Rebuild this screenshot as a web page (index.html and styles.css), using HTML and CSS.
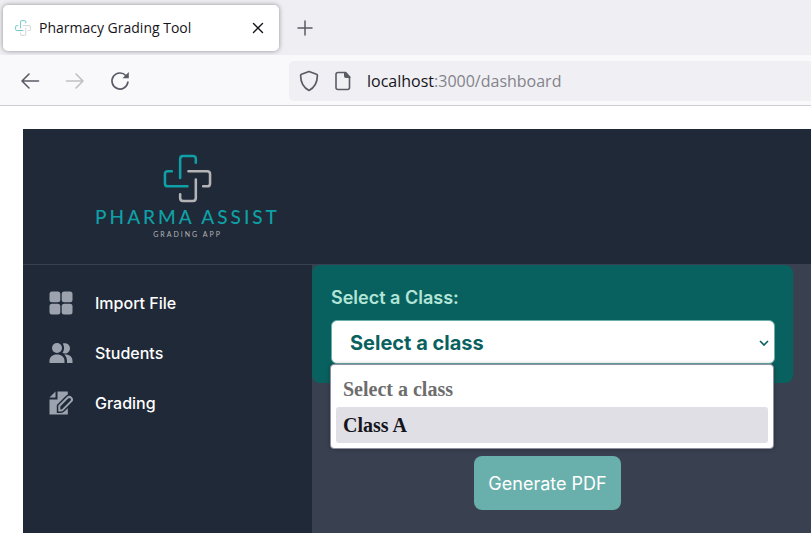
FILE: index.html
```html
<!DOCTYPE html>
<html lang="en">
<head>
<meta charset="utf-8">
<title>Pharmacy Grading Tool</title>
<link rel="stylesheet" href="styles.css">
</head>
<body>
<svg class="defs" aria-hidden="true">
  <symbol id="cross" viewBox="0 0 50 50" fill="none" stroke-width="2.6" stroke-linecap="round" stroke-linejoin="round">
    <path stroke="#0fa0a6" d="M33.500 9V5Q33.500 2 30.500 2H20.500Q17.500 2 17.500 5V24.500M9 17.500H5Q2 17.500 2 20.500V30Q2 33 5 33H25"/>
    <path stroke="#b4b4b6" d="M26 17.500H45Q48 17.500 48 20.500V30Q48 33 45 33H41M33.500 26V45Q33.500 48 30.500 48H20.500Q17.500 48 17.500 45V41"/>
  </symbol>
</svg>
<div class="tabstrip">
  <div class="tab">
    <svg class="favicon"><use href="#cross"/></svg>
    <span class="tab-title">Pharmacy Grading Tool</span>
    <button class="icon-button" aria-label="Close tab"><svg width="12" height="12" viewBox="0 0 12 12"><path d="M1.500 1.500l9 9M10.500 1.500l-9 9" stroke="#15141a" stroke-width="1.400" stroke-linecap="round"/></svg></button>
  </div>
  <button class="icon-button" aria-label="New tab"><svg width="16" height="16" viewBox="0 0 16 16"><path d="M8 1v14M1 8h14" stroke="#5b5b66" stroke-width="1.500" stroke-linecap="round"/></svg></button>
</div>
<div class="toolbar">
  <nav class="history" aria-label="History">
    <button class="icon-button" aria-label="Back"><svg width="20" height="18" viewBox="0 0 20 18" fill="none" stroke="#5b5b66" stroke-width="1.600" stroke-linecap="round" stroke-linejoin="round"><path d="M18.500 9H2M9 2L2 9l7 7"/></svg></button>
    <button class="icon-button" aria-label="Forward" disabled><svg width="20" height="18" viewBox="0 0 20 18" fill="none" stroke="#bfbfc5" stroke-width="1.600" stroke-linecap="round" stroke-linejoin="round"><path d="M1.500 9H18M11 2l7 7-7 7"/></svg></button>
    <button class="icon-button" aria-label="Reload"><svg width="20" height="20" viewBox="0 0 20 20"><path d="M17.900 11.200A8 8 0 1 1 16 4.700" fill="none" stroke="#5b5b66" stroke-width="1.700" stroke-linecap="round"/><path d="M18.800 1v6.300h-6.300z" fill="#5b5b66"/></svg></button>
  </nav>
  <div class="address">
    <svg width="20" height="22" viewBox="0 0 20 22" fill="none" stroke="#5b5b66" stroke-width="1.700" stroke-linejoin="round"><path d="M10 1.500l7.500 2.800q.9.400.9 1.300C18.300 13 15 18 10 20.500 5 18 1.700 13 1.600 5.600q0-.9.900-1.300z"/></svg>
    <svg width="16" height="20" viewBox="0 0 16 20"><path d="M3 1.500h7.500l4 4.500v10.500q0 2-2 2H3q-2 0-2-2v-13q0-2 2-2z" fill="none" stroke="#5b5b66" stroke-width="1.600"/><path d="M9 1h2l4.500 5v1H11q-2 0-2-2z" fill="#5b5b66"/></svg>
    <span class="url"><b>localhost</b>:3000/dashboard</span>
  </div>
</div>
<div class="app">
  <header class="app-header">
    <div class="brand">
      <svg class="brand-mark"><use href="#cross"/></svg>
      <span class="brand-name">PHARMA ASSIST</span>
      <span class="brand-sub">GRADING APP</span>
    </div>
  </header>
  <div class="body">
    <nav class="sidebar" aria-label="Main">
      <a href="#import"><svg viewBox="0 0 24 24"><rect x="0.500" y="0.500" width="10.800" height="10.800" rx="2.500"/><rect x="12.700" y="0.500" width="10.800" height="10.800" rx="2.500"/><rect x="0.500" y="12.700" width="10.800" height="10.800" rx="2.500"/><rect x="12.700" y="12.700" width="10.800" height="10.800" rx="2.500"/></svg>Import File</a>
      <a href="#students"><svg viewBox="0 0 24 24"><circle cx="8" cy="7" r="5"/><path d="M.5 22v-2c0-4 3-6.500 7.500-6.500s7.500 2.500 7.500 6.500v2zM13.500 12c2.200-3 2-6.800.3-9.400 3.700-1.400 7.200 1 7.200 4.600 0 3.800-3.800 6.400-7.500 4.800zM16 13.500c5 0 7.500 2.500 7.500 6.500v2H18v-2c0-2.500-.8-4.800-2.800-6.500z"/></svg>Students</a>
      <a href="#grading"><svg viewBox="0 0 24 24"><path d="M.5 6.500L6.500.5v6z"/><path d="M8.500.5h10.300V23.500H.5v-15h8z"/><path class="pencil-gap" d="M10.300 19.500v-4.500l8.200-8.200a2.500 2.500 0 0 1 3.600 3.600l-8.200 8.200q-.9.900-2 .9z"/><path class="pencil" d="M10.300 19.500v-4.500l8.200-8.200a2.500 2.500 0 0 1 3.600 3.600l-8.200 8.200q-.9.900-2 .9z"/></svg>Grading</a>
    </nav>
    <main class="content">
      <section class="card">
        <label for="class-select">Select a Class:</label>
        <div class="picker">
          <select id="class-select"><option>Select a class</option><option>Class A</option></select>
          <svg class="chevron" viewBox="0 0 10 6"><path d="M1 1l4 4 4-4" fill="none" stroke="#09615f" stroke-width="1.600"/></svg>
          <ul class="options" role="listbox" aria-label="Classes">
            <li class="placeholder" role="option">Select a class</li>
            <li class="active" role="option" aria-selected="true">Class A</li>
          </ul>
        </div>
      </section>
      <div class="actions"><button class="generate">Generate PDF</button></div>
    </main>
  </div>
</div>
</body>
</html>
```
FILE: styles.css
```css
* { box-sizing: border-box; }
body {
  margin: 0;
  min-height: 100vh;
  display: flex;
  flex-direction: column;
  background: #fff;
  font-family: Inter, sans-serif;
}
svg { flex: none; }
.defs { position: absolute; width: 0; height: 0; }
.icon-button { display: flex; padding: 0; border: 0; background: none; }

.tabstrip {
  display: flex;
  align-items: center;
  gap: 18px;
  height: 55px;
  padding: 0 3px;
  background: #efeef3;
}
.tab {
  display: flex;
  align-items: center;
  gap: 8px;
  width: 276px;
  height: 46px;
  padding: 0 15px 0 12px;
  border-radius: 5px;
  background: #fff;
  box-shadow: 0 0 5px rgba(0, 0, 0, 0.4);
  font: 14px "Open Sans", sans-serif;
  color: #15141a;
}
.tab-title { flex: 1; white-space: nowrap; }
.favicon { width: 16px; height: 16px; opacity: 0.7; }

.toolbar {
  display: flex;
  align-items: center;
  height: 51px;
  padding-top: 1px;
  border-bottom: 1px solid #ccccd1;
  background: #f9f9fb;
}
.history { display: flex; align-items: center; gap: 25px; width: 289px; padding-left: 20px; }
.address {
  flex: 1;
  display: flex;
  align-items: center;
  gap: 16px;
  height: 40px;
  padding-left: 10px;
  border-radius: 5px 0 0 5px;
  background: #f0eff4;
}
.url { font: 16px "Open Sans", sans-serif; color: #83838a; }
.url b { font-weight: 400; color: #15141a; }

.app {
  flex: 1;
  display: flex;
  flex-direction: column;
  margin: 23px 0 0 23px;
  background: #202938;
}
.app-header { height: 136px; padding: 25px 0 0 70px; border-bottom: 1px solid #374151; }
.brand { display: flex; flex-direction: column; align-items: center; width: 189px; }
.brand-mark { width: 49px; height: 49px; }
.brand-name {
  margin-top: 2px;
  font: 500 19px/24px Lato, sans-serif;
  letter-spacing: 3px;
  white-space: nowrap;
  color: #0fa0a6;
}
.brand-sub { font: 7px/10px Lato, sans-serif; letter-spacing: 2px; color: #b4b4b6; }

.body { flex: 1; display: flex; }
.sidebar { width: 289px; padding: 13px 26px; }
.sidebar a {
  display: flex;
  align-items: center;
  gap: 22px;
  height: 50px;
  color: #fff;
  font-size: 16px;
  font-weight: 500;
  text-decoration: none;
}
.sidebar svg { width: 24px; height: 24px; fill: #9ca3af; }
.sidebar .pencil-gap { fill: #202938; stroke: #202938; stroke-width: 5px; }
.sidebar .pencil { fill: #202938; stroke: #9ca3af; stroke-width: 2px; }

.content { flex: 1; padding-right: 18px; background: #394151; }
.card { padding: 21px 18px 19px 19px; border-radius: 8px; background: #09615f; }
.card label {
  display: block;
  margin-bottom: 10px;
  font-size: 18px;
  font-weight: 600;
  line-height: 24px;
  color: #b2e5d8;
}
.picker { position: relative; }
.picker select {
  display: block;
  appearance: none;
  width: 100%;
  height: 44px;
  padding: 1px 18px 0;
  border: 1px solid #6aafab;
  border-radius: 6px;
  background: #fff;
  font: 700 20px Inter, sans-serif;
  color: #09615f;
}
.chevron { position: absolute; right: 6px; top: 20px; width: 10px; height: 6px; }
.options {
  position: absolute;
  top: 100%;
  left: -1px;
  right: 1px;
  margin: 0;
  padding: 6px 5px 5px;
  border: 1px solid #8f8f9d;
  border-radius: 4px;
  background: #fff;
  box-shadow: 0 0 4px rgba(0, 0, 0, 0.3);
  list-style: none;
  font: bold 20px/36px "Liberation Serif", serif;
}
.options li { padding: 0 7px; border-radius: 3px; }
.placeholder { color: #6d6d6d; }
.active { background: #e0dfe6; color: #15141a; }
.actions { display: flex; justify-content: center; padding: 73px 10px 0 0; }
.generate {
  height: 54px;
  padding: 0 14px;
  border: 0;
  border-radius: 8px;
  background: #69afab;
  font: 18px Inter, sans-serif;
  color: #fff;
}
```
